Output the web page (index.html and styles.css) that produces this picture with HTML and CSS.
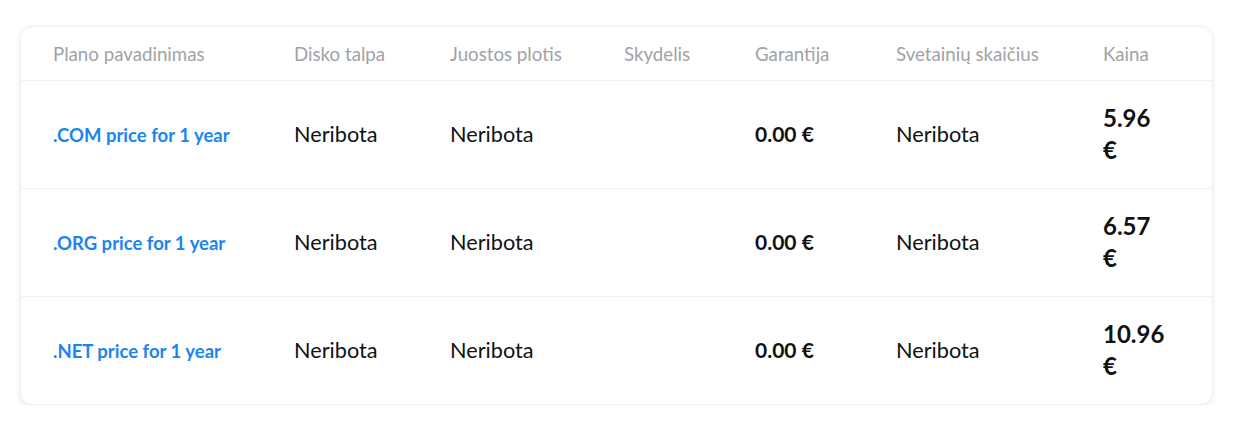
FILE: index.html
```html
<!DOCTYPE html>
<html lang="lt">
<head>
    <meta charset="UTF-8">
    <meta name="viewport" content="width=device-width, initial-scale=1.0">
    <title>Domenų kainos</title>
    <link rel="stylesheet" href="styles.css">
</head>
<body>

    <!-- Plans table -->
    <div class="plans-card">
        <table class="plans">
            <colgroup>
                <col class="c-name">
                <col class="c-disk">
                <col class="c-band">
                <col class="c-panel">
                <col class="c-warranty">
                <col class="c-sites">
                <col class="c-price">
            </colgroup>
            <thead>
                <tr>
                    <th>Plano pavadinimas</th>
                    <th>Disko talpa</th>
                    <th>Juostos plotis</th>
                    <th>Skydelis</th>
                    <th>Garantija</th>
                    <th>Svetainių skaičius</th>
                    <th>Kaina</th>
                </tr>
            </thead>
            <tbody>
                <tr>
                    <td><a href="#" class="plan-link">.COM price for 1 year</a></td>
                    <td>Neribota</td>
                    <td>Neribota</td>
                    <td></td>
                    <td class="bold">0.00 €</td>
                    <td>Neribota</td>
                    <td class="price">5.96 €</td>
                </tr>
                <tr>
                    <td><a href="#" class="plan-link">.ORG price for 1 year</a></td>
                    <td>Neribota</td>
                    <td>Neribota</td>
                    <td></td>
                    <td class="bold">0.00 €</td>
                    <td>Neribota</td>
                    <td class="price">6.57 €</td>
                </tr>
                <tr>
                    <td><a href="#" class="plan-link">.NET price for 1 year</a></td>
                    <td>Neribota</td>
                    <td>Neribota</td>
                    <td></td>
                    <td class="bold">0.00 €</td>
                    <td>Neribota</td>
                    <td class="price">10.96 €</td>
                </tr>
            </tbody>
        </table>
    </div>

</body>
</html>
```

FILE: styles.css
```css
body {
    font-family: Lato, "Open Sans", Arial, sans-serif;
    background-color: #fff;
    margin: 0;
    padding: 26px 35px 0 20px;
}
.plans-card {
    background-color: #fff;
    border: 1px solid #eef0f3;
    border-radius: 12px;
    box-shadow: 0 2px 6px rgba(0, 0, 0, 0.08);
    overflow: hidden;
}
.plans {
    width: 100%;
    border-collapse: collapse;
    table-layout: fixed;
}
.c-name { width: 273px; }
.c-disk { width: 156px; }
.c-band { width: 174px; }
.c-panel { width: 131px; }
.c-warranty { width: 141px; }
.c-sites { width: 207px; }
.plans th {
    height: 53px;
    padding: 0;
    text-align: left;
    font-size: 18.7px;
    font-weight: normal;
    color: #9fa2a7;
    border-bottom: 1px solid #eef0f3;
}
.plans td {
    height: 105px;
    padding: 0 0 2px 0;
    font-size: 21.7px;
    color: #111;
    border-bottom: 1px solid #eef0f3;
}
.plans tbody tr:last-child td {
    border-bottom: none;
}
.plans th:first-child, .plans td:first-child {
    padding-left: 32px;
}
.plan-link {
    color: #1a84f1;
    font-weight: bold;
    font-size: 18.5px;
    text-decoration: none;
}
.plans td.bold {
    font-weight: bold;
    font-size: 21px;
}
.plans td.price {
    font-weight: bold;
    font-size: 24px;
    line-height: 32px;
    padding-right: 44px;
}
```
